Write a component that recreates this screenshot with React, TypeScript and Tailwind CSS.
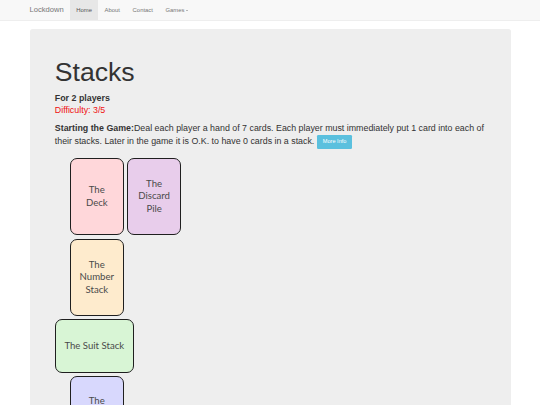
import React from "react";

function Card({ lines, bg, wide }: { lines: string[]; bg: string; wide?: boolean }) {
  return (
    <div
      className={`${wide ? "w-[79px] h-[53.5px]" : "w-[54px] h-[77px]"} ${bg} shrink-0 border-[1.5px] border-[#1f1f1f] rounded-[7px] flex flex-col items-center justify-center text-center text-[9.6px] leading-[12.8px] text-[#4a4a4a] font-['Lato','Open_Sans',sans-serif]`}
    >
      {lines.map((l, i) => (
        <span key={i}>{l}</span>
      ))}
    </div>
  );
}

export default function App() {
  return (
    <div className="min-h-[405px] bg-white font-['Liberation_Sans',Arial,sans-serif] text-[#333]">
      <nav className="h-[21px] bg-[#f8f8f8] border-b border-[#eeeeee]">
        <div className="mx-auto w-[493.6px] h-full flex items-stretch">
          <a className="px-[6.3px] text-[7.6px] leading-[20px] text-[#777]">Lockdown</a>
          <ul className="flex items-stretch">
            <li className="px-[6.3px] text-[5.9px] leading-[20px] text-[#555] bg-[#e7e7e7]">Home</li>
            <li className="px-[6.3px] text-[5.9px] leading-[20px] text-[#777]">About</li>
            <li className="px-[6.3px] text-[5.9px] leading-[20px] text-[#777]">Contact</li>
            <li className="px-[6.3px] text-[5.9px] leading-[20px] text-[#777] flex items-center">
              Games
              <span className="ml-[1px] w-0 h-0 border-l-[1.7px] border-r-[1.7px] border-t-[1.7px] border-l-transparent border-r-transparent border-t-[#777]" />
            </li>
          </ul>
        </div>
      </nav>
      <div className="mx-auto w-[493.6px] px-[6.3px] mt-[8.4px]">
        <div className="bg-[#eeeeee] rounded-[2.5px] px-[25.3px] pt-[20.25px] pb-[40px]">
          <h1 className="text-[26.6px] leading-[1.1] mt-[8.4px] mb-[4.7px] font-normal">Stacks</h1>
          <p className="text-[8.86px] leading-[12px] font-bold">For 2 players</p>
          <p className="text-[8.86px] leading-[12px] text-[#ee1111]">Difficulty: 3/5</p>
          <p className="mt-[6px] text-[8.86px] leading-[12.66px]">
            <b>Starting the Game:</b>Deal each player a hand of 7 cards. Each player must immediately put 1 card into each of their stacks. Later in the game it is O.K. to have 0 cards in a stack.{" "}
            <span className="inline-block align-middle px-[6px] py-[3.3px] text-[5.6px] leading-[7.6px] rounded-[1.3px] bg-[#5bc0de] text-white">
              More Info
            </span>
          </p>
          <div className="mt-[9.4px] flex flex-col">
            <div className="ml-[15px] flex gap-[3.3px]">
              <Card lines={["The", "Deck"]} bg="bg-[#ffd7da]" />
              <Card lines={["The", "Discard", "Pile"]} bg="bg-[#e8cdeb]" />
            </div>
            <div className="ml-[15px] mt-[4px] flex">
              <Card lines={["The", "Number", "Stack"]} bg="bg-[#feebcd]" />
            </div>
            <div className="mt-[3px] flex">
              <Card lines={["The Suit Stack"]} bg="bg-[#d8f5d5]" wide />
            </div>
            <div className="ml-[15px] mt-[3px] flex">
              <Card lines={["The", "Color", "Stack"]} bg="bg-[#d8d8fd]" />
            </div>
          </div>
        </div>
      </div>
    </div>
  );
}
